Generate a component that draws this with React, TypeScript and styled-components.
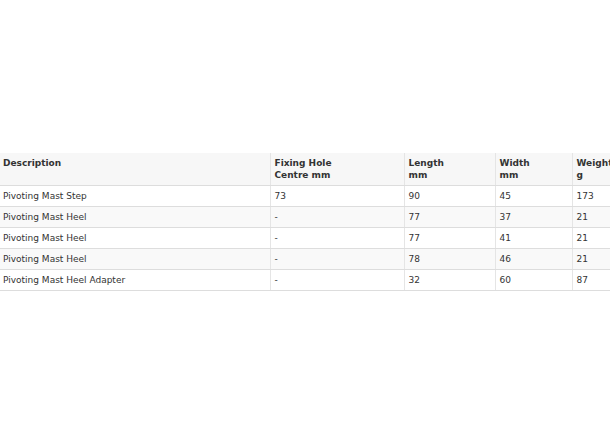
import React from "react";
import styled, { createGlobalStyle } from "styled-components";

const Global = createGlobalStyle`
  html, body { margin: 0; padding: 0; background: #fff; overflow: hidden; }
  body { font-family: Verdana, "DejaVu Sans", sans-serif; }
`;

const Page = styled.div`
  width: 610px;
  height: 441px;
  overflow: hidden;
  padding-top: 153px;
  box-sizing: border-box;
`;

const Table = styled.table`
  border-collapse: collapse;
  table-layout: fixed;
  width: 660px;
  font-size: 9px;
  line-height: 12px;
  color: #333;
`;

const Th = styled.th<{ $w: number }>`
  box-sizing: border-box;
  width: ${(p) => p.$w}px;
  text-align: left;
  vertical-align: top;
  font-weight: bold;
  padding: 4px;
  background: #f7f7f7;
  border-bottom: 1px solid #ddd;
  border-left: 1px solid #e5e5e5;
  &:first-child { border-left: none; padding-left: 3px; }
`;

const Tr = styled.tr<{ $stripe: boolean }>`
  background: ${(p) => (p.$stripe ? "#f9f9f9" : "#fff")};
`;

const Td = styled.td`
  padding: 4px;
  vertical-align: top;
  border-bottom: 1px solid #ddd;
  border-left: 1px solid #e5e5e5;
  white-space: nowrap;
  &:first-child { border-left: none; padding-left: 3px; }
`;

const headers: [string, number][] = [
  ["Description", 270],
  ["Fixing Hole\nCentre mm", 134],
  ["Length\nmm", 91],
  ["Width\nmm", 77],
  ["Weight\ng", 88],
];

const rows = [
  ["Pivoting Mast Step", "73", "90", "45", "173"],
  ["Pivoting Mast Heel", "-", "77", "37", "21"],
  ["Pivoting Mast Heel", "-", "77", "41", "21"],
  ["Pivoting Mast Heel", "-", "78", "46", "21"],
  ["Pivoting Mast Heel Adapter", "-", "32", "60", "87"],
];

export default function App() {
  return (
    <>
      <Global />
      <Page>
        <Table>
          <thead>
            <tr>
              {headers.map(([h, w]) => (
                <Th key={h} $w={w}>
                  {h.split("\n").map((l, i) => (
                    <React.Fragment key={i}>
                      {i > 0 && <br />}
                      {l}
                    </React.Fragment>
                  ))}
                </Th>
              ))}
            </tr>
          </thead>
          <tbody>
            {rows.map((r, i) => (
              <Tr key={i} $stripe={i % 2 === 1}>
                {r.map((c, j) => (
                  <Td key={j}>{c}</Td>
                ))}
              </Tr>
            ))}
          </tbody>
        </Table>
      </Page>
    </>
  );
}
